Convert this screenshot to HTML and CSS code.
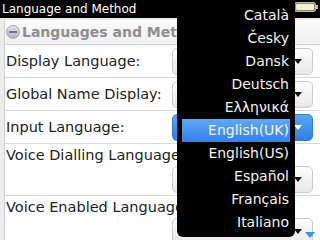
FILE: index.html
```html
<!DOCTYPE html>
<html lang="en">
<head>
  <meta charset="UTF-8">
  <title>Language and Method</title>
  <link rel="stylesheet" href="styles.css">
</head>
<body>

  <div class="titlebar">
    <span>Language and Method</span>
    <svg class="battery" width="24" height="10" viewBox="0 0 24 10">
      <rect x="0.5" y="0.5" width="21" height="9" rx="2" fill="#8a8a80" stroke="#bdbdb0"/>
      <rect x="2" y="2" width="18" height="6" rx="1" fill="#f4f0c8"/>
      <rect x="22" y="3" width="2" height="4" fill="#bdbdb0"/>
    </svg>
  </div>

  <div class="screen">
    <div class="panel">
      <div class="section">
        <span class="collapse"></span>
        <span>Languages and Method</span>
      </div>

      <div class="row">
        <span class="label">Display Language:</span>
        <div class="choice"><span class="arrow"></span></div>
      </div>
      <div class="row">
        <span class="label">Global Name Display:</span>
        <div class="choice"><span class="arrow"></span></div>
      </div>
      <div class="row">
        <span class="label">Input Language:</span>
        <div class="choice focus"><span class="arrow"></span></div>
      </div>
      <div class="row stack">
        <span class="label">Voice Dialling Language</span>
        <div class="choice"><span class="arrow"></span></div>
      </div>
      <div class="row stack">
        <span class="label">Voice Enabled Language</span>
        <div class="choice"><span class="arrow"></span></div>
      </div>
    </div>
    <span class="more"></span>
  </div>

  <!-- popup list for Input Language -->
  <ul class="menu">
    <li>Català</li>
    <li>Česky</li>
    <li>Dansk</li>
    <li>Deutsch</li>
    <li>Ελληνικά</li>
    <li class="selected">English(UK)</li>
    <li>English(US)</li>
    <li>Español</li>
    <li>Français</li>
    <li>Italiano</li>
  </ul>

</body>
</html>
```

FILE: styles.css
```css
body {
  margin: 0;
  width: 320px;
  height: 240px;
  overflow: hidden;
  position: relative;
  font-family: 'DejaVu Sans', Verdana, sans-serif;
  background-color: #ececec;
  color: #222;
}
.titlebar {
  height: 18px;
  background-color: #000;
  color: #fff;
  font-size: 12px;
  line-height: 18px;
  padding: 0 2px 0 2px;
  display: flex;
  justify-content: space-between;
  align-items: center;
}
.battery {
  margin-top: -4px;
}
.screen {
  position: relative;
  height: 222px;
  padding: 2px 0 0 4px;
  box-sizing: border-box;
}
.panel {
  background-color: #fff;
  border-left: 1px solid #d0d0d0;
  height: 100%;
}
.section {
  height: 24px;
  display: flex;
  align-items: center;
  gap: 2px;
  padding-left: 1px;
  color: #8e8e8e;
  font-weight: bold;
  font-size: 14px;
  white-space: nowrap;
  overflow: hidden;
  background: linear-gradient(#fafafa, #f0f0f0);
}
.collapse {
  width: 14px;
  height: 14px;
  border-radius: 50%;
  background: linear-gradient(#e4e4e4, #b4b4b4);
  border: 1px solid #aaa;
  box-sizing: border-box;
  position: relative;
  flex-shrink: 0;
}
.collapse::after {
  content: "";
  position: absolute;
  left: 2px;
  right: 2px;
  top: 5px;
  height: 2px;
  background-color: #6f6fa8;
}
.row {
  display: flex;
  justify-content: space-between;
  align-items: center;
  height: 33px;
  box-sizing: border-box;
  border-top: 1px solid #d8d8d8;
  padding: 0 7px 0 1px;
  font-size: 14.5px;
  white-space: nowrap;
}
.row.stack {
  flex-direction: column;
  align-items: stretch;
  justify-content: flex-start;
  height: 52px;
  padding-top: 3px;
}
.row.stack .choice {
  align-self: flex-end;
  margin-top: 3px;
}
.label {
  overflow: hidden;
}
.choice {
  width: 141px;
  height: 27px;
  box-sizing: border-box;
  border: 1px solid #cacaca;
  border-radius: 5px;
  background: linear-gradient(#fdfdfd, #e8e8e8);
  position: relative;
  flex-shrink: 0;
}
.choice.focus {
  border-color: #2f7fe0;
  background: linear-gradient(#5aa6f4, #2f7ee2);
}
.arrow {
  position: absolute;
  right: 10px;
  top: 10px;
  border-left: 4px solid transparent;
  border-right: 4px solid transparent;
  border-top: 5px solid #111;
}
.choice.focus .arrow {
  border-top-color: #fff;
}
.more {
  position: absolute;
  right: 5px;
  bottom: 2px;
  border-left: 5px solid transparent;
  border-right: 5px solid transparent;
  border-top: 6px solid #3d8fe6;
}
.menu {
  position: absolute;
  left: 177px;
  top: 0;
  width: 118px;
  height: 237px;
  margin: 0;
  padding: 4px 0 0 0;
  box-sizing: border-box;
  list-style: none;
  background-color: #000;
  border-radius: 0 0 6px 6px;
}
.menu li {
  height: 23px;
  line-height: 23px;
  text-align: right;
  padding-right: 6px;
  font-size: 14px;
  color: #f4f4f0;
}
.menu li.selected {
  margin: 0 5px;
  padding-right: 1px;
  background: linear-gradient(#5ea8f6, #3580e4);
}
```
